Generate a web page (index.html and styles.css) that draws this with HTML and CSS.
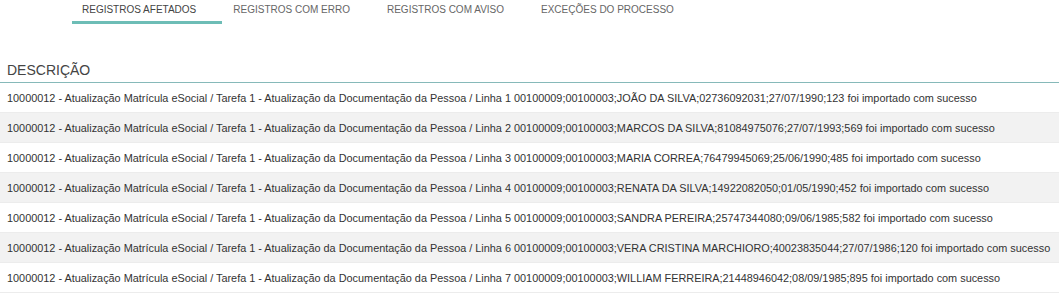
FILE: index.html
```html
<!DOCTYPE html>
<html lang="pt">
<head>
<meta charset="utf-8">
<link rel="stylesheet" href="styles.css">
</head>
<body>
<nav class="tabs">
  <div class="tab active">REGISTROS AFETADOS</div>
  <div class="tab">REGISTROS COM ERRO</div>
  <div class="tab">REGISTROS COM AVISO</div>
  <div class="tab">EXCEÇÕES DO PROCESSO</div>
</nav>
<div class="table">
  <div class="thead">DESCRIÇÃO</div>
  <div class="row">10000012 - Atualização Matrícula eSocial / Tarefa 1 - Atualização da Documentação da Pessoa / Linha 1 00100009;00100003;JOÃO DA SILVA;02736092031;27/07/1990;123 foi importado com sucesso</div>
  <div class="row alt">10000012 - Atualização Matrícula eSocial / Tarefa 1 - Atualização da Documentação da Pessoa / Linha 2 00100009;00100003;MARCOS DA SILVA;81084975076;27/07/1993;569 foi importado com sucesso</div>
  <div class="row">10000012 - Atualização Matrícula eSocial / Tarefa 1 - Atualização da Documentação da Pessoa / Linha 3 00100009;00100003;MARIA CORREA;76479945069;25/06/1990;485 foi importado com sucesso</div>
  <div class="row alt">10000012 - Atualização Matrícula eSocial / Tarefa 1 - Atualização da Documentação da Pessoa / Linha 4 00100009;00100003;RENATA DA SILVA;14922082050;01/05/1990;452 foi importado com sucesso</div>
  <div class="row">10000012 - Atualização Matrícula eSocial / Tarefa 1 - Atualização da Documentação da Pessoa / Linha 5 00100009;00100003;SANDRA PEREIRA;25747344080;09/06/1985;582 foi importado com sucesso</div>
  <div class="row alt">10000012 - Atualização Matrícula eSocial / Tarefa 1 - Atualização da Documentação da Pessoa / Linha 6 00100009;00100003;VERA CRISTINA MARCHIORO;40023835044;27/07/1986;120 foi importado com sucesso</div>
  <div class="row">10000012 - Atualização Matrícula eSocial / Tarefa 1 - Atualização da Documentação da Pessoa / Linha 7 00100009;00100003;WILLIAM FERREIRA;21448946042;08/09/1985;895 foi importado com sucesso</div>
</div>
</body>
</html>
```
FILE: styles.css
```css
html, body {
  margin: 0;
  padding: 0;
  background: #fff;
}
body {
  font-family: "Liberation Sans", Arial, sans-serif;
  color: #333;
}
.tabs {
  display: flex;
  padding-left: 72px;
  height: 24px;
}
.tab {
  font-size: 10px;
  color: #666;
  padding: 4px 26px 0 10px;
  height: 17px;
  line-height: 12px;
  border-bottom: 3px solid transparent;
}
.tab + .tab {
  margin-left: 1px;
}
.tab.active {
  color: #444;
  border-bottom-color: #6dbdb6;
}
.table {
  margin-top: 37px;
}
.thead {
  font-size: 14px;
  color: #444;
  padding: 0 7px;
  height: 21px;
  line-height: 19px;
  border-bottom: 1px solid #86b9b9;
}
.row {
  font-size: 10.88px;
  color: #333;
  padding: 0 7px;
  height: 29px;
  line-height: 30px;
  border-bottom: 1px solid #ececec;
  white-space: nowrap;
}
.row.alt {
  background: #f2f2f2;
}
```
